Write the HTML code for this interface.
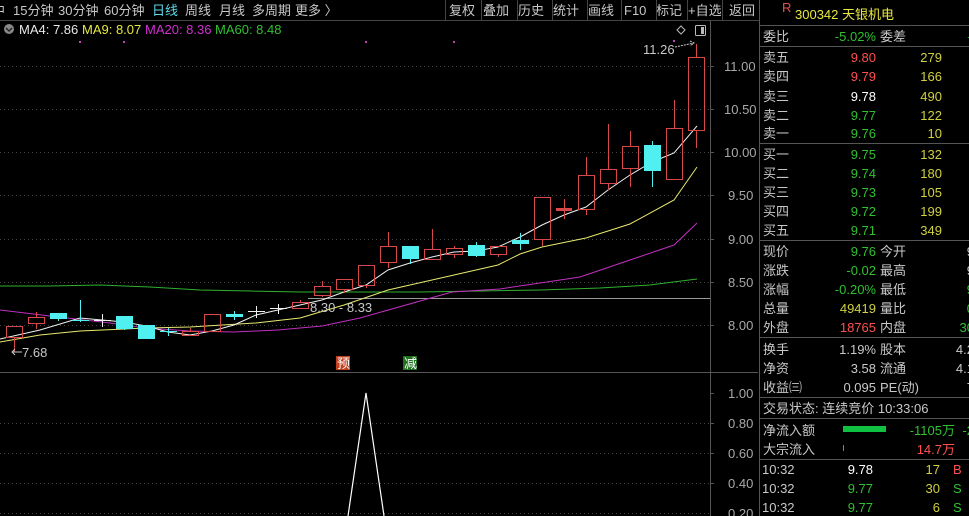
<!DOCTYPE html>
<html><head><meta charset="utf-8"><style>
html,body{margin:0;padding:0;background:#000;width:969px;height:516px;overflow:hidden}
svg{display:block}
text{font-family:"Liberation Sans","Noto Sans CJK SC",sans-serif;font-size:13px}
</style></head><body>
<svg width="969" height="516" viewBox="0 0 969 516" xmlns="http://www.w3.org/2000/svg">
<rect width="969" height="516" fill="#000"/>
<!-- toolbar -->
<g fill="#c8c8c8">
<text x="-8" y="15">中</text>
<text x="13" y="15">15分钟</text>
<text x="58" y="15">30分钟</text>
<text x="104" y="15">60分钟</text>
<text x="152" y="15" fill="#5fd8e8">日线</text>
<text x="185" y="15">周线</text>
<text x="219" y="15">月线</text>
<text x="252" y="15">多周期</text>
<text x="295" y="15">更多 〉</text>
<text x="449" y="15">复权</text>
<text x="483" y="15">叠加</text>
<text x="518" y="15">历史</text>
<text x="553" y="15">统计</text>
<text x="588" y="15">画线</text>
<text x="624" y="15">F10</text>
<text x="656" y="15">标记</text>
<text x="688" y="15">+自选</text>
<text x="729" y="15">返回</text>
</g>
<g stroke="#444" stroke-width="1">
<line x1="445.5" y1="0" x2="445.5" y2="20"/><line x1="481.5" y1="0" x2="481.5" y2="20"/>
<line x1="517.5" y1="0" x2="517.5" y2="20"/><line x1="552.5" y1="0" x2="552.5" y2="20"/>
<line x1="587.5" y1="0" x2="587.5" y2="20"/><line x1="621.5" y1="0" x2="621.5" y2="20"/>
<line x1="656.5" y1="0" x2="656.5" y2="20"/><line x1="687.5" y1="0" x2="687.5" y2="20"/>
<line x1="722.5" y1="0" x2="722.5" y2="20"/>
<line x1="0" y1="20.5" x2="759" y2="20.5"/>
</g>
<!-- MA legend -->
<circle cx="9" cy="29" r="5" fill="#888"/><path d="M6 28 L9 31 L12 28" stroke="#222" fill="none" stroke-width="1.4"/>
<text x="19" y="34" fill="#e8e8e8">MA4: 7.86</text>
<text x="82" y="34" fill="#e8e840">MA9: 8.07</text>
<text x="145" y="34" fill="#d030d0">MA20: 8.36</text>
<text x="215" y="34" fill="#30c030">MA60: 8.48</text>
<g fill="#c040c0"><rect x="79" y="41" width="2" height="2"/><rect x="123" y="41" width="2" height="2"/><rect x="365" y="41" width="2" height="2"/><rect x="453" y="41" width="2" height="2"/><rect x="673" y="40" width="2" height="2"/></g>
<!-- grid -->
<g stroke="#444" stroke-dasharray="1,3">
<line x1="0" y1="66.5" x2="710" y2="66.5"/><line x1="0" y1="109.5" x2="710" y2="109.5"/>
<line x1="0" y1="152.5" x2="710" y2="152.5"/><line x1="0" y1="195.5" x2="710" y2="195.5"/>
<line x1="0" y1="239.5" x2="710" y2="239.5"/><line x1="0" y1="282.5" x2="710" y2="282.5"/>
<line x1="0" y1="325.5" x2="710" y2="325.5"/>
<line x1="0" y1="423.5" x2="710" y2="423.5"/><line x1="0" y1="453.5" x2="710" y2="453.5"/>
<line x1="0" y1="483.5" x2="710" y2="483.5"/><line x1="0" y1="513.5" x2="710" y2="513.5"/>
</g>
<line x1="308" y1="298.5" x2="710" y2="298.5" stroke="#999"/>
<!-- axis -->
<line x1="710.5" y1="21" x2="710.5" y2="516" stroke="#555"/>
<line x1="0" y1="372.5" x2="758" y2="372.5" stroke="#555"/>
<g fill="#a8a8a8" font-size="13">
<text x="724" y="71">11.00</text><text x="724" y="114">10.50</text><text x="724" y="157">10.00</text>
<text x="728" y="200">9.50</text><text x="728" y="244">9.00</text><text x="728" y="287">8.50</text><text x="728" y="330">8.00</text>
<text x="728" y="398">1.00</text><text x="728" y="428">0.80</text><text x="728" y="458">0.60</text><text x="728" y="488">0.40</text><text x="728" y="518">0.20</text>
</g>
<g stroke="#555"><line x1="710" y1="66.5" x2="714" y2="66.5"/><line x1="710" y1="109.5" x2="714" y2="109.5"/><line x1="710" y1="152.5" x2="714" y2="152.5"/><line x1="710" y1="195.5" x2="714" y2="195.5"/><line x1="710" y1="239.5" x2="714" y2="239.5"/><line x1="710" y1="282.5" x2="714" y2="282.5"/><line x1="710" y1="325.5" x2="714" y2="325.5"/><line x1="710" y1="393.5" x2="714" y2="393.5"/><line x1="710" y1="423.5" x2="714" y2="423.5"/><line x1="710" y1="453.5" x2="714" y2="453.5"/><line x1="710" y1="483.5" x2="714" y2="483.5"/></g>
<!-- MA lines -->
<polyline fill="none" stroke="#30b030" stroke-width="1" points="0,286 50,286 100,285 150,287 200,290 250,291 300,292 360,292 420,292 480,291 540,290 600,288 650,285 697,279"/>
<polyline fill="none" stroke="#c030c0" stroke-width="1" points="0,310 50,316 102,322 146,328 190,331 234,332 278,330 322,326 360,318 452,292 500,289 540,283 580,277 630,260 674,245 697,223"/>
<polyline fill="none" stroke="#e8e870" stroke-width="1" points="0,342 40,335 80,331 146,328 190,327 256,323 300,318 344,305 388,290 432,280 476,270 498,265 520,254 542,247 586,238 630,224 674,200 697,167"/>
<polyline fill="none" stroke="#f0f0f0" stroke-width="1" points="0,339 40,330 80,318 102,320 124,322 146,326 168,332 190,335 212,331 234,325 256,315 278,310 300,305 322,300 344,292 366,285 388,270 410,263 432,257 454,252 476,251 498,247 520,237 542,225 564,215 586,207 608,190 630,175 652,162 674,153 697,126"/>
<!-- candles -->
<g stroke="#d84848" fill="none" stroke-width="1">
<rect x="6.5" y="326.5" width="16" height="11"/><line x1="14.5" y1="337" x2="14.5" y2="352"/>
<rect x="28.5" y="317.5" width="16" height="6"/><line x1="36.5" y1="312" x2="36.5" y2="317"/><line x1="36.5" y1="324" x2="36.5" y2="329"/>
<rect x="182.5" y="331.5" width="16" height="4"/><line x1="190.5" y1="328" x2="190.5" y2="331"/>
<rect x="204.5" y="314.5" width="16" height="17"/>
<rect x="292.5" y="302.5" width="16" height="6"/><line x1="300.5" y1="300" x2="300.5" y2="302"/>
<rect x="314.5" y="286.5" width="16" height="9"/><line x1="322.5" y1="281" x2="322.5" y2="286"/><line x1="322.5" y1="296" x2="322.5" y2="297"/>
<rect x="336.5" y="279.5" width="16" height="10"/><line x1="344.5" y1="290" x2="344.5" y2="293"/>
<rect x="358.5" y="265.5" width="16" height="20"/><line x1="366.5" y1="286" x2="366.5" y2="288"/>
<rect x="380.5" y="246.5" width="16" height="16"/><line x1="388.5" y1="232" x2="388.5" y2="246"/><line x1="388.5" y1="263" x2="388.5" y2="268"/>
<rect x="424.5" y="249.5" width="16" height="10"/><line x1="432.5" y1="229" x2="432.5" y2="249"/>
<rect x="446.5" y="248.5" width="16" height="6"/><line x1="454.5" y1="246" x2="454.5" y2="248"/><line x1="454.5" y1="255" x2="454.5" y2="258"/>
<rect x="490.5" y="246.5" width="16" height="8"/><line x1="498.5" y1="255" x2="498.5" y2="257"/>
<rect x="534.5" y="197.5" width="16" height="42"/><line x1="542.5" y1="240" x2="542.5" y2="246"/>
<line x1="564.5" y1="199" x2="564.5" y2="219"/>
<rect x="578.5" y="175.5" width="16" height="34"/><line x1="586.5" y1="157" x2="586.5" y2="175"/><line x1="586.5" y1="210" x2="586.5" y2="215"/>
<rect x="600.5" y="169.5" width="16" height="14"/><line x1="608.5" y1="124" x2="608.5" y2="169"/><line x1="608.5" y1="184" x2="608.5" y2="190"/>
<rect x="622.5" y="146.5" width="16" height="22"/><line x1="630.5" y1="131" x2="630.5" y2="146"/><line x1="630.5" y1="169" x2="630.5" y2="187"/>
<rect x="666.5" y="128.5" width="16" height="51"/><line x1="674.5" y1="100" x2="674.5" y2="128"/>
<rect x="688.5" y="57.5" width="16" height="73"/><line x1="696.5" y1="44" x2="696.5" y2="57"/><line x1="696.5" y1="131" x2="696.5" y2="148"/>
</g>
<rect x="556" y="208" width="16" height="3" fill="#d84848"/>
<g fill="#50f0f0" stroke="#50f0f0">
<rect x="50.5" y="313.5" width="16" height="5"/><line x1="58.5" y1="318" x2="58.5" y2="321"/>
<line x1="80.5" y1="300" x2="80.5" y2="322"/><line x1="72" y1="320.5" x2="89" y2="320.5"/>
<rect x="116.5" y="316.5" width="16" height="12"/><line x1="124.5" y1="328" x2="124.5" y2="330"/>
<rect x="138.5" y="325.5" width="16" height="13"/>
<line x1="168.5" y1="328" x2="168.5" y2="336"/><line x1="160" y1="331.5" x2="177" y2="331.5"/>
<rect x="226.5" y="314.5" width="16" height="2"/><line x1="234.5" y1="311" x2="234.5" y2="320"/>
<rect x="402.5" y="246.5" width="16" height="12"/><line x1="410.5" y1="258" x2="410.5" y2="264"/>
<rect x="468.5" y="245.5" width="16" height="10"/><line x1="476.5" y1="242" x2="476.5" y2="257"/>
<rect x="512.5" y="240.5" width="16" height="3"/><line x1="520.5" y1="233" x2="520.5" y2="250"/>
<rect x="644.5" y="145.5" width="16" height="25"/><line x1="652.5" y1="141" x2="652.5" y2="187"/>
</g>
<g stroke="#f0f0f0">
<line x1="102.5" y1="314" x2="102.5" y2="327"/><line x1="94" y1="320.5" x2="111" y2="320.5"/>
<line x1="256.5" y1="306" x2="256.5" y2="318"/><line x1="248" y1="311.5" x2="265" y2="311.5"/>
<line x1="278.5" y1="304" x2="278.5" y2="314"/><line x1="270" y1="308.5" x2="287" y2="308.5"/>
</g>
<!-- annotations -->
<text x="22" y="357" fill="#c8c8c8">7.68</text>
<path d="M22 352 L12 352 M15 349 L12 352 L15 355" stroke="#c8c8c8" fill="none"/>
<text x="310" y="312" fill="#c8c8c8">8.30 - 8.33</text>
<text x="643" y="54" fill="#c8c8c8">11.26</text>
<path d="M675 47 L694 43 M690 41 L694 43 L690 46" stroke="#c8c8c8" fill="none" stroke-dasharray="2,1"/>
<path d="M681 26 L685 30 L681 34 L677 30 Z" stroke="#bbb" fill="none"/>
<rect x="695.5" y="25.5" width="10" height="10" rx="1" stroke="#bbb" fill="none"/><rect x="701" y="27" width="3" height="7" fill="#bbb"/>
<rect x="336" y="356" width="14" height="14" fill="#c04020"/><text x="337" y="368" fill="#fff" font-size="12">预</text>
<rect x="403" y="356" width="14" height="14" fill="#207020"/><text x="404" y="368" fill="#fff" font-size="12">减</text>
<!-- lower indicator -->
<polyline fill="none" stroke="#fff" stroke-width="1.2" points="348,516 366,393 384,516"/>
<!-- right panel -->
<line x1="759.5" y1="0" x2="759.5" y2="516" stroke="#555"/>
<g stroke="#555">
<line x1="760" y1="25.5" x2="969" y2="25.5"/><line x1="760" y1="46.5" x2="969" y2="46.5"/>
<line x1="760" y1="143.5" x2="969" y2="143.5"/><line x1="760" y1="240.5" x2="969" y2="240.5"/>
<line x1="760" y1="337.5" x2="969" y2="337.5"/><line x1="760" y1="397.5" x2="969" y2="397.5"/>
<line x1="760" y1="418.5" x2="969" y2="418.5"/><line x1="760" y1="459.5" x2="969" y2="459.5"/>
</g>
<text x="782" y="12" fill="#e05050" font-size="9">R</text>
<text x="795" y="19" fill="#e8e840" font-size="15">300342 天银机电</text>
<g fill="#c8c8c8">
<text x="763" y="41">委比</text><text x="880" y="41">委差</text>
<text x="763" y="62">卖五</text><text x="763" y="81">卖四</text><text x="763" y="101">卖三</text><text x="763" y="120">卖二</text><text x="763" y="138">卖一</text>
<text x="763" y="159">买一</text><text x="763" y="178">买二</text><text x="763" y="197">买三</text><text x="763" y="216">买四</text><text x="763" y="235">买五</text>
<text x="763" y="256">现价</text><text x="880" y="256">今开</text>
<text x="763" y="275">涨跌</text><text x="880" y="275">最高</text>
<text x="763" y="294">涨幅</text><text x="880" y="294">最低</text>
<text x="763" y="313">总量</text><text x="880" y="313">量比</text>
<text x="763" y="332">外盘</text><text x="880" y="332">内盘</text>
<text x="763" y="354">换手</text><text x="880" y="354">股本</text>
<text x="763" y="373">净资</text><text x="880" y="373">流通</text>
<text x="763" y="392">收益㈢</text><text x="880" y="392">PE(动)</text>
<text x="763" y="413">交易状态: 连续竞价 10:33:06</text>
<text x="763" y="435">净流入额</text><text x="763" y="454">大宗流入</text>
<text x="762" y="474">10:32</text><text x="762" y="493">10:32</text><text x="762" y="512">10:32</text>
</g>
<g text-anchor="end">
<text x="876" y="41" fill="#30c030">-5.02%</text><text x="972" y="41" fill="#30c030">-</text>
<text x="876" y="62" fill="#ff5050">9.80</text><text x="942" y="62" fill="#d0d040">279</text>
<text x="876" y="81" fill="#ff5050">9.79</text><text x="942" y="81" fill="#d0d040">166</text>
<text x="876" y="101" fill="#fff">9.78</text><text x="942" y="101" fill="#d0d040">490</text>
<text x="876" y="120" fill="#30c030">9.77</text><text x="942" y="120" fill="#d0d040">122</text>
<text x="876" y="138" fill="#30c030">9.76</text><text x="942" y="138" fill="#d0d040">10</text>
<text x="876" y="159" fill="#30c030">9.75</text><text x="942" y="159" fill="#d0d040">132</text>
<text x="876" y="178" fill="#30c030">9.74</text><text x="942" y="178" fill="#d0d040">180</text>
<text x="876" y="197" fill="#30c030">9.73</text><text x="942" y="197" fill="#d0d040">105</text>
<text x="876" y="216" fill="#30c030">9.72</text><text x="942" y="216" fill="#d0d040">199</text>
<text x="876" y="235" fill="#30c030">9.71</text><text x="942" y="235" fill="#d0d040">349</text>
<text x="876" y="256" fill="#30c030">9.76</text><text x="974" y="256" fill="#c8c8c8">9</text>
<text x="876" y="275" fill="#30c030">-0.02</text><text x="974" y="275" fill="#c8c8c8">9</text>
<text x="876" y="294" fill="#30c030">-0.20%</text><text x="974" y="294" fill="#30c030">9</text>
<text x="876" y="313" fill="#d0d040">49419</text><text x="974" y="313" fill="#30c030">0</text>
<text x="876" y="332" fill="#ff5050">18765</text><text x="974" y="332" fill="#30c030">30</text>
<text x="876" y="354" fill="#c8c8c8">1.19%</text><text x="974" y="354" fill="#c8c8c8">4.2</text>
<text x="876" y="373" fill="#c8c8c8">3.58</text><text x="974" y="373" fill="#c8c8c8">4.1</text>
<text x="876" y="392" fill="#c8c8c8">0.095</text><text x="974" y="392" fill="#c8c8c8">7</text>
<text x="955" y="435" fill="#30c030">-1105万</text><text x="974" y="435" fill="#30c030">-2</text>
<text x="955" y="454" fill="#ff5050">14.7万</text>
<text x="873" y="474" fill="#fff">9.78</text><text x="940" y="474" fill="#d0d040">17</text>
<text x="873" y="493" fill="#30c030">9.77</text><text x="940" y="493" fill="#d0d040">30</text>
<text x="873" y="512" fill="#30c030">9.77</text><text x="940" y="512" fill="#d0d040">6</text>
</g>
<text x="953" y="474" fill="#ff5050">B</text><text x="953" y="493" fill="#30c030">S</text><text x="953" y="512" fill="#30c030">S</text>
<rect x="843" y="426" width="43" height="6" fill="#10c040"/>
<rect x="843" y="445" width="1" height="6" fill="#ff5050"/>
</svg>
</body></html>
